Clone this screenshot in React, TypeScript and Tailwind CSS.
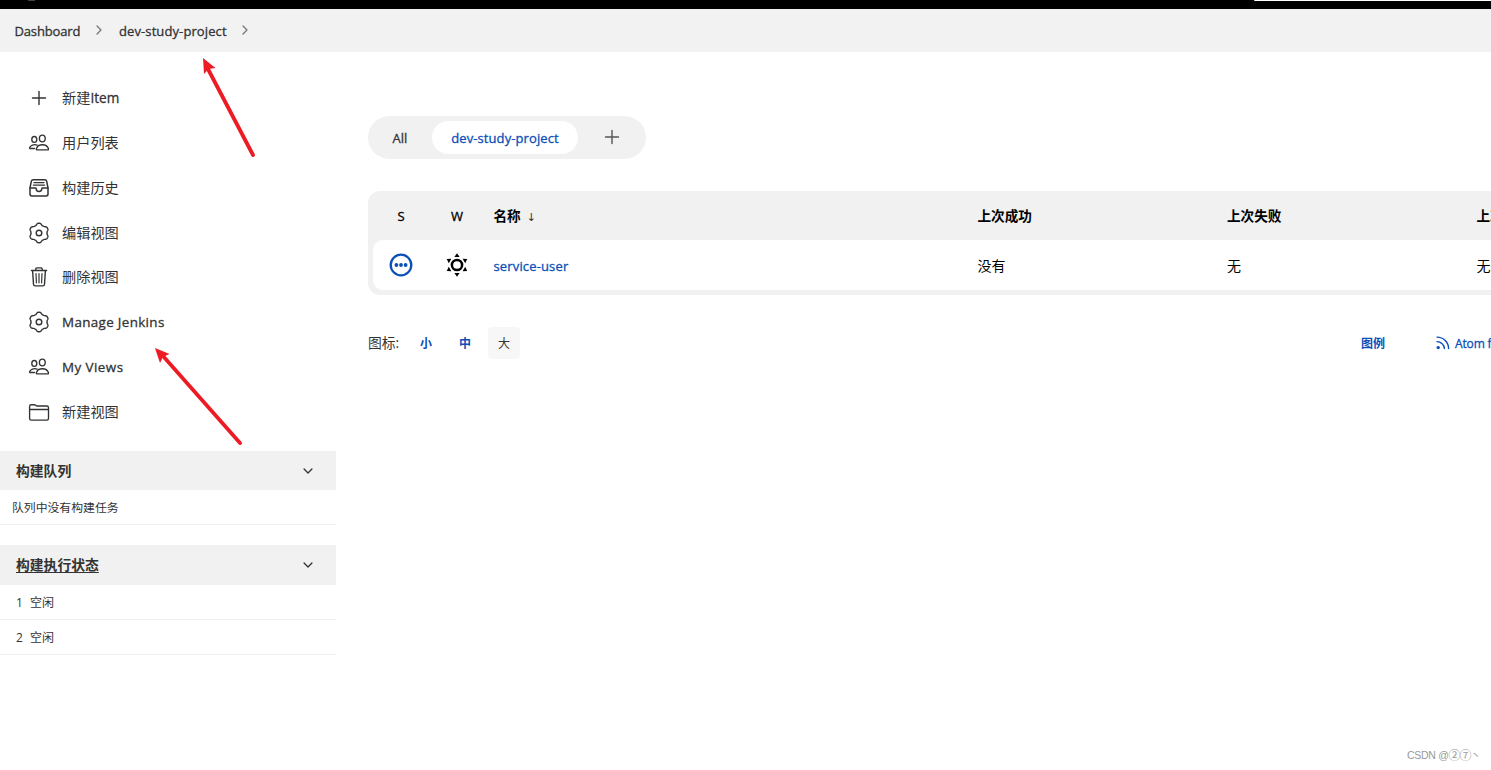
import React from "react";
import { IoChevronDownOutline, IoChevronForwardOutline } from "react-icons/io5";

function Glyph({ children, width = 1.4 }: { children: React.ReactNode; width?: number }) {
  return (
    <svg className="size-[22px] shrink-0" viewBox="0 0 22 22" fill="none" stroke="currentColor" strokeWidth={width} strokeLinecap="round" strokeLinejoin="round">
      {children}
    </svg>
  );
}

const AddIcon = () => (
  <Glyph>
    <path d="M11 4.5V17.5M4.5 11H17.5" />
  </Glyph>
);

const PeopleIcon = () => (
  <Glyph width={1.35}>
    <ellipse cx="6.3" cy="7.4" rx="2.5" ry="2.9" />
    <ellipse cx="14.3" cy="6.5" rx="2.9" ry="3.4" />
    <path d="M14.4 12.7C11.6 12.7 9.2 14.1 8.4 16.5Q8 17.9 9.2 17.9H19.5Q20.8 17.9 20.4 16.5C19.6 14.1 17.2 12.7 14.4 12.7Z" />
    <path d="M9.2 13.1C5.7 12 2.5 13.3 1.7 15.5Q1.4 16.5 2.4 16.5H6.4" />
  </Glyph>
);

const TrayIcon = () => (
  <Glyph width={1.5}>
    <path d="M2 11 3.3 4.4Q3.7 2.7 5.2 2.7H16.8Q18.3 2.7 18.7 4.4L20 11V17Q20 18.9 18.1 18.9H3.9Q2 18.9 2 17Z" />
    <path d="M2 11H7.4Q8.1 11 8.2 11.8A2.8 2.6 0 0 0 13.8 11.8Q13.9 11 14.6 11H20" />
    <path d="M6 5.6H16M5.4 8.2H16.6" strokeWidth="1.2" />
  </Glyph>
);

const gearOutline =
  Array.from({ length: 120 }, (_, i) => {
    const angle = (i * Math.PI) / 60;
    const lobe = Math.max(-1, Math.min(1, 1.5 * Math.cos(6 * angle)));
    const r = 8.9 + lobe * 0.8;
    return `${i ? "L" : "M"}${(11 + r * Math.sin(angle)).toFixed(2)} ${(11 - r * Math.cos(angle)).toFixed(2)}`;
  }).join("") + "Z";

const GearIcon = () => (
  <Glyph>
    <path d={gearOutline} />
    <circle cx="11" cy="11" r="2.8" />
  </Glyph>
);

const TrashIcon = () => (
  <Glyph>
    <path d="M3.4 4.5H18.6M7.8 4.3V3Q7.8 1.9 8.9 1.9H13.1Q14.2 1.9 14.2 3V4.3" />
    <path d="M4.6 4.7 5.5 18.3Q5.6 19.9 7.2 19.9H14.8Q16.4 19.9 16.5 18.3L17.4 4.7" />
    <path d="M8 7.5 8.4 16.8M11 7.5V16.8M14 7.5 13.6 16.8" strokeWidth="1.2" />
  </Glyph>
);

const FolderIcon = () => (
  <Glyph width={1.35}>
    <path d="M1.6 8.4V5.4Q1.6 3.7 3.3 3.7H6.2Q7 3.7 7.7 4.2L8.2 4.6Q8.8 5 9.6 5H18.8Q20.5 5 20.5 6.7V17.4Q20.5 19.1 18.8 19.1H3.3Q1.6 19.1 1.6 17.4ZM1.6 8.5H20.5" />
  </Glyph>
);

const tasks = [
  { icon: AddIcon, label: <>新建<span className="text-[13.6px] [-webkit-text-stroke:0.3px]">Item</span></> },
  { icon: PeopleIcon, label: "用户列表" },
  { icon: TrayIcon, label: "构建历史" },
  { icon: GearIcon, label: "编辑视图" },
  { icon: TrashIcon, label: "删除视图" },
  { icon: GearIcon, label: <span className="text-[13.4px] tracking-[0.35px] [-webkit-text-stroke:0.3px]">Manage Jenkins</span> },
  { icon: PeopleIcon, label: <span className="text-[13.4px] tracking-[0.45px] [-webkit-text-stroke:0.3px]">My Views</span> },
  { icon: FolderIcon, label: "新建视图" },
];

function StatusIcon() {
  return (
    <svg className="size-6" viewBox="0 0 24 24">
      <circle cx="12" cy="12" r="10.3" fill="none" stroke="#0b4fb8" strokeWidth="2.3" />
      <circle cx="7.4" cy="12" r="1.9" fill="#0b4fb8" />
      <circle cx="12" cy="12" r="1.9" fill="#0b4fb8" />
      <circle cx="16.6" cy="12" r="1.9" fill="#0b4fb8" />
    </svg>
  );
}

function WeatherIcon() {
  return (
    <svg className="size-6" viewBox="0 0 24 24">
      <circle cx="12" cy="12" r="5.1" fill="none" stroke="#000" strokeWidth="2.5" />
      {[0, 60, 120, 180, 240, 300].map((a) => (
        <path key={a} d="M12 0.2 14.6 4H9.4Z" transform={`rotate(${a} 12 12)`} />
      ))}
    </svg>
  );
}

function FeedIcon() {
  return (
    <svg className="h-[14px] w-[14px]" viewBox="0 0 14 14" fill="none" stroke="#0b4fb8" strokeWidth="1.4" strokeLinecap="round">
      <path d="M1 1.1C7.5 1.1 12.6 6.2 12.6 12.6M1 5.6C5 5.6 8.4 9 8.4 12.6" />
      <circle cx="2.2" cy="11.6" r="1.7" fill="#0b4fb8" stroke="none" />
    </svg>
  );
}

function Pane({ title, tall, children }: { title: string; tall?: boolean; children: React.ReactNode }) {
  return (
    <section>
      <div className={tall ? "flex h-10 items-center justify-between bg-[#f1f1f1] pl-4 pr-[21px]" : "flex h-[39px] items-center justify-between bg-[#f1f1f1] pl-4 pr-[21px] pt-px"}>
        <span className={tall ? "text-[13.8px] font-semibold underline underline-offset-2" : "text-[13.8px] font-semibold"}>{title}</span>
        <IoChevronDownOutline className="size-[14px]" />
      </div>
      {children}
    </section>
  );
}

export default function App() {
  return (
    <div className="relative flex h-[770px] w-[1491px] flex-col overflow-hidden bg-white font-['Open_Sans','Noto_Sans_CJK_SC',sans-serif] text-[#333]">
      <header className="flex h-[9px] shrink-0 items-start justify-between bg-black pl-7">
        <div className="h-px w-[7px] bg-[#444]" />
        <div className="h-px w-[237px] rounded-bl bg-white" />
      </header>

      <nav className="flex h-[43px] shrink-0 items-center bg-[#f2f2f2] pl-[14.5px] text-[13px]">
        <span className="w-[65.5px] whitespace-nowrap pt-0.5 tracking-[-0.15px] [-webkit-text-stroke:0.3px]">Dashboard</span>
        <IoChevronForwardOutline className="mb-0.5 ml-3 mr-[13px] size-[14px] text-[#777]" />
        <span className="w-[108px] whitespace-nowrap pt-0.5 tracking-[0.1px] [-webkit-text-stroke:0.3px]">dev-study-project</span>
        <IoChevronForwardOutline className="mb-0.5 ml-[11px] size-[14px] text-[#777]" />
      </nav>

      <div className="flex min-h-0 flex-1">
        <aside className="w-[336px] shrink-0 pt-[23.8px]">
          <ul>
            {tasks.map(({ icon: Icon, label }, i) => (
              <li key={i} className="flex h-[44.8px] items-center gap-[12px] pl-[28px] text-[14.2px] leading-5">
                <Icon />
                <span>{label}</span>
              </li>
            ))}
          </ul>
          <div className="mt-[16.8px] flex flex-col gap-5">
            <Pane title="构建队列">
              <p className="flex h-[35px] items-center border-b border-[#f0f0f0] pl-3 pt-px text-[11.85px]">队列中没有构建任务</p>
            </Pane>
            <Pane title="构建执行状态" tall>
              {[1, 2].map((n) => (
                <div key={n} className="flex h-[35px] items-center gap-[7px] border-b border-[#f0f0f0] pl-4 pt-0.5 text-[12px]">
                  <span className="w-[7px] text-[12px]">{n}</span>
                  <span>空闲</span>
                </div>
              ))}
            </Pane>
          </div>
        </aside>

        <main className="min-w-0 flex-1 pl-8 pt-16">
          <div className="flex h-[43px] w-[278px] items-center rounded-full bg-[#f1f1f1] text-[13px] [-webkit-text-stroke:0.3px]">
            <span className="w-16 pt-0.5 text-center">All</span>
            <span className="flex h-[33px] w-[146px] items-center justify-center rounded-full bg-white pt-0.5 tracking-[0.1px] text-[#0b4fb8]">dev-study-project</span>
            <span className="flex flex-1 justify-center pb-px text-[#555]">
              <AddIcon />
            </span>
          </div>

          <div className="mt-8 h-[104px] w-[1180px] rounded-xl bg-[#f1f1f1] px-[5px] text-[14px] text-black">
            <div className="grid h-[49px] grid-cols-[56px_56px_auto] items-center pt-0.5 text-[13.6px]">
              <span className="text-center text-[13px] [-webkit-text-stroke:0.3px]">S</span>
              <span className="text-center text-[13px] [-webkit-text-stroke:0.3px]">W</span>
              <div className="grid grid-cols-[484px_249.5px_249.5px] whitespace-nowrap pl-[8.5px] font-semibold">
                <span>名称<span className="ml-1.5 font-['DejaVu_Sans'] text-[11px] font-normal text-[#333]">↓</span></span>
                <span>上次成功</span>
                <span>上次失败</span>
                <span className="col-start-4">上次持续时间</span>
              </div>
            </div>
            <div className="grid h-[50px] grid-cols-[56px_56px_auto] items-center rounded-[10px] bg-white">
              <span className="flex justify-center"><StatusIcon /></span>
              <span className="flex justify-center"><WeatherIcon /></span>
              <div className="grid grid-cols-[484px_249.5px_249.5px] items-center whitespace-nowrap pl-[8.5px]">
                <span className="pt-[3px] text-[13px] tracking-[0.15px] text-[#0b4fb8] [-webkit-text-stroke:0.3px]">service-user</span>
                <span>没有</span>
                <span>无</span>
                <span className="col-start-4">无</span>
              </div>
            </div>
          </div>

          <div className="mt-8 flex h-8 items-center whitespace-nowrap text-[12px] *:shrink-0">
            <span className="w-[42px] pt-px text-[13.8px]">图标:</span>
            <span className="w-8 pt-0.5 text-center font-bold text-[#0b4fb8]">小</span>
            <span className="ml-[7px] w-8 pt-0.5 text-center font-bold text-[#0b4fb8]">中</span>
            <span className="ml-[7px] flex size-8 items-center justify-center rounded bg-[#f7f7f7] pt-0.5">大</span>
            <span className="ml-[841px] w-[75px] pt-0.5 font-bold text-[#0b4fb8]">图例</span>
            <span className="flex items-center gap-[5px] tracking-[-0.15px] text-[#0b4fb8]">
              <FeedIcon />
              <span className="pt-0.5 [-webkit-text-stroke:0.3px]">Atom feed</span>
            </span>
          </div>
        </main>
      </div>

      <svg className="pointer-events-none absolute left-0 top-0" width="300" height="450" viewBox="0 0 300 450" fill="#ed1c24" stroke="#ed1c24">
        <path d="M253 155 208 69M240 443 163 356" strokeWidth="3.8" strokeLinecap="round" fill="none" />
        <path d="M203 58 215.5 68 208.5 69 204 74Z" stroke="none" />
        <path d="M155 348 169.5 354 163 357 160 363Z" stroke="none" />
      </svg>
      <span className="absolute left-[1407px] top-[748px] flex items-center whitespace-nowrap font-['Liberation_Sans','Noto_Sans_CJK_SC',sans-serif] text-[10.5px] leading-[14px] tracking-[-0.3px] text-[#999]">
        CSDN @<span className="font-['Noto_Sans_CJK_JP'] text-[12px] tracking-[-1px]">②⑦</span>丶
      </span>
    </div>
  );
}
